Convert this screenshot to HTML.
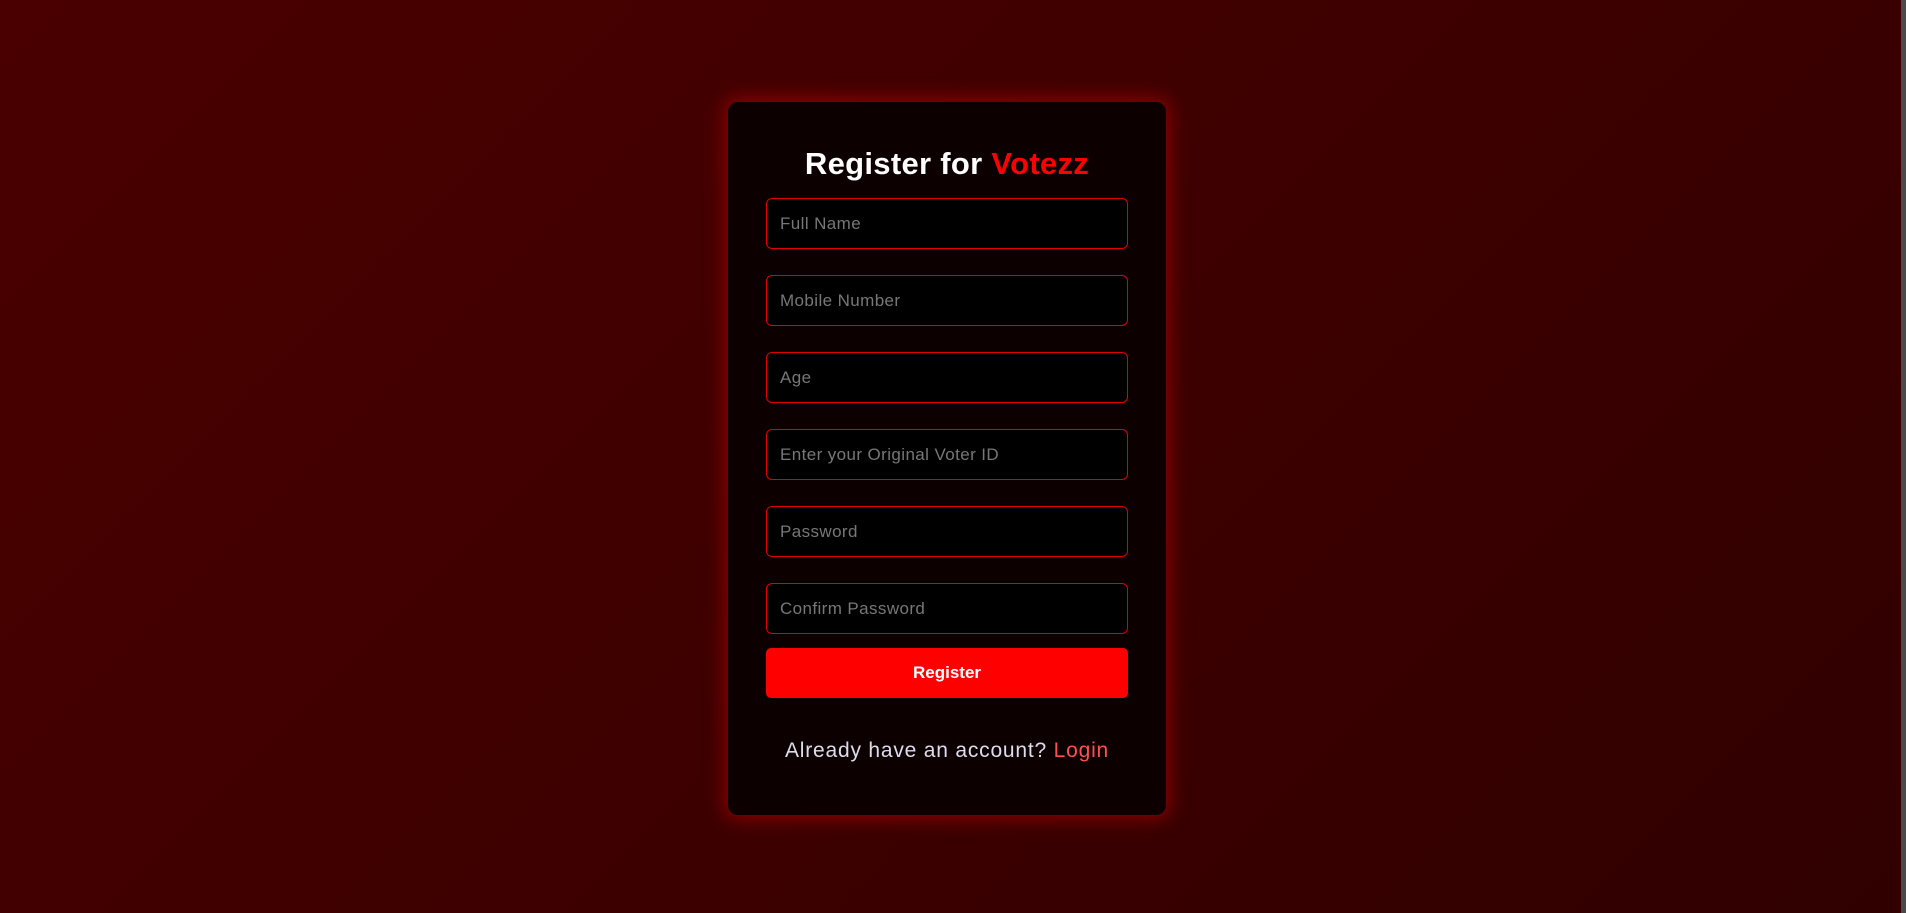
<!DOCTYPE html>
<html><head><meta charset="utf-8"><style>
html,body{margin:0;padding:0;width:1906px;height:913px;overflow:hidden}
body{background:linear-gradient(135deg,#4a0000 0%,#3e0000 50%,#300000 100%);font-family:"Liberation Sans",sans-serif;position:relative}
.sb{position:absolute;right:0;top:0;width:5px;height:913px;background:#4a4a4a}
.card{position:absolute;left:728px;top:102px;width:438px;height:713px;background:#0d0000;border-radius:10px;box-shadow:0 0 18px 4px rgba(200,0,0,.55)}
h1{position:absolute;left:0;right:0;margin:0;text-align:center;color:#fff;font-size:31px;font-weight:bold;line-height:40px;letter-spacing:0.3px}
h1 span{color:#ff0000}
.in{position:absolute;left:38px;width:360px;height:49px;border:1px solid #e00000;border-radius:6px;background:#000;color:#777;font-size:17px;line-height:49px;letter-spacing:0.4px}
.in span{margin-left:13px}
.btn{position:absolute;left:38px;top:546px;width:362px;height:50px;background:#ff0000;border-radius:5px;color:#fff;font-weight:bold;font-size:17px;text-align:center;line-height:50px}
.ft{position:absolute;left:0;right:0;top:635px;text-align:center;color:#dde;font-size:21px;line-height:28px;letter-spacing:0.8px}
.ft span{color:#ff5050}
</style></head><body>
<div class="sb"></div>
<div class="card">
<h1 style="top:42px">Register for <span>Votezz</span></h1>
<div class="in" style="top:96px"><span>Full Name</span></div>
<div class="in" style="top:173px"><span>Mobile Number</span></div>
<div class="in" style="top:250px"><span>Age</span></div>
<div class="in" style="top:327px"><span>Enter your Original Voter ID</span></div>
<div class="in" style="top:404px"><span>Password</span></div>
<div class="in" style="top:481px"><span>Confirm Password</span></div>
<div class="btn">Register</div>
<div class="ft">Already have an account? <span>Login</span></div>
</div>
</body></html>
